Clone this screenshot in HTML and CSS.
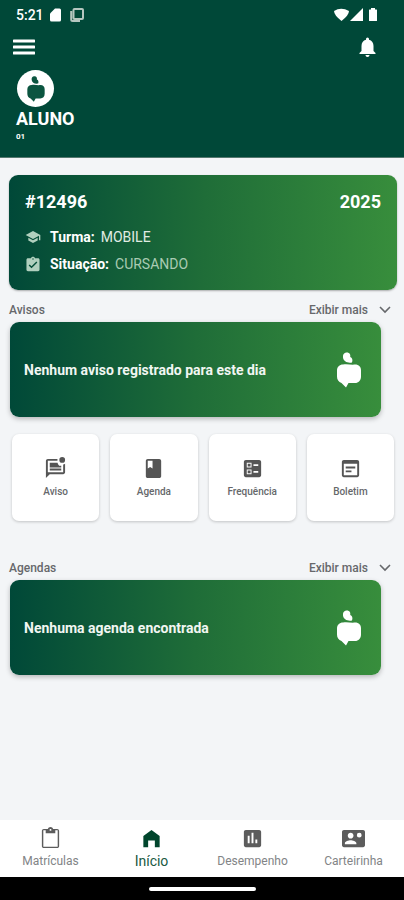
FILE: index.html
```html
<!DOCTYPE html>
<html lang="pt-BR">
<head>
    <meta charset="UTF-8">
    <meta name="viewport" content="width=device-width, initial-scale=1.0">
    <title>Aluno</title>
    <link rel="stylesheet" href="styles.css">
</head>
<body>
    <!-- shared shapes -->
    <svg class="defs" aria-hidden="true">
        <symbol id="apple" viewBox="0 0 24 36">
            <path d="M9 .5c3.500-.5 4.800 2 4.200 4.500 2 .8 2.800 3 1.800 5.500-4.500.8-8.500-1-9-5C5.800 3 6.500 1 9 .5z"/>
            <path d="M6 12.500c4-1 8 .6 12 0 4 0 6 2.500 6 6v6c0 4-2.500 6.500-6 6.500h-6.500L9 35.500 4.500 31C1.500 30 0 27.500 0 24.500v-6c0-3.500 2.500-6 6-6z"/>
        </symbol>
        <symbol id="chevron" viewBox="0 0 12 8">
            <path d="M1 1l5 5 5-5" fill="none" stroke="currentColor" stroke-width="1.6"/>
        </symbol>
    </svg>

    <header>
        <div class="status-bar">
            <span class="clock">5:21</span>
            <svg class="status-icon" viewBox="0 0 14 14"><path d="M6 .5h4.500q1.500 0 1.500 1.500v10q0 1.500-1.500 1.500h-8Q1 13.500 1 12V5.500z"/></svg>
            <svg class="status-icon copy" viewBox="0 0 14 14"><path d="M4.500 1h7.500q1 0 1 1v8q0 1-1 1H4.500q-1 0-1-1V2q0-1 1-1zM1.200 3v8.500q0 1.500 1.500 1.500H10"/></svg>
            <svg class="signal-icons" viewBox="0 0 44 14">
                <path d="M0 3Q7-1.500 15 3 15 7 7.500 13 0 7 0 3z"/>
                <path d="M29 0v13H16z"/>
                <path d="M37 0h4v1.500h1.500q.5 0 .5.500v10.500q0 .5-.5.500h-7q-.5 0-.5-.5V2q0-.5.5-.5H37z"/>
            </svg>
        </div>
        <div class="toolbar">
            <button type="button" aria-label="Menu">
                <svg class="menu-icon" viewBox="0 0 22 16"><path d="M1 2h20M1 8h20M1 14h20"/></svg>
            </button>
            <button type="button" aria-label="Notificações">
                <svg class="bell-icon" viewBox="0 0 16 20"><path d="M8 20c1.100 0 2-.9 2-2H6c0 1.100.9 2 2 2zm6-6V9c0-3.100-1.600-5.600-4.500-6.300v-.7a1.500 1.500 0 0 0-3 0v.7C3.600 3.400 2 5.900 2 9v5l-2 2v1h16v-1z"/></svg>
            </button>
        </div>
        <div class="profile">
            <div class="avatar">
                <svg><use href="#apple"/></svg>
            </div>
            <h1>ALUNO</h1>
            <p>01</p>
        </div>
    </header>

    <main>
        <section class="enrollment">
            <div class="enrollment-top">
                <span>#12496</span>
                <span>2025</span>
            </div>
            <div class="enrollment-row">
                <svg viewBox="0 2 24 20"><path d="M5 13.180v4L12 21l7-3.820v-4L12 17l-7-3.820zM12 3L1 9l11 6 9-4.910V17h2V9L12 3z"/></svg>
                <b>Turma:</b>
                <span>MOBILE</span>
            </div>
            <div class="enrollment-row faded">
                <svg viewBox="2 0 20 22"><path d="M19 3h-4.180C14.400 1.840 13.300 1 12 1s-2.400.84-2.820 2H5c-1.100 0-2 .9-2 2v14c0 1.100.9 2 2 2h14c1.100 0 2-.9 2-2V5c0-1.100-.9-2-2-2zm-7 0c.55 0 1 .45 1 1s-.45 1-1 1-1-.45-1-1 .45-1 1-1zm-2 14l-4-4 1.410-1.410L10 14.170l6.590-6.590L18 9l-8 8z"/></svg>
                <b>Situação:</b>
                <span>CURSANDO</span>
            </div>
        </section>

        <section>
            <div class="section-head">
                <h2>Avisos</h2>
                <button type="button">Exibir mais <svg><use href="#chevron"/></svg></button>
            </div>
            <div class="banner">
                <p>Nenhum aviso registrado para este dia</p>
                <svg><use href="#apple"/></svg>
            </div>
        </section>

        <div class="shortcuts">
            <button type="button">
                <svg viewBox="0 0 24 24"><path d="M18 14H6v-2h12v2zm0-3H6V9h12v2zM6 6h8.100c.2 1.200.8 2.200 1.700 3H6V6zm16 .98V16c0 1.100-.9 2-2 2H6l-4 4V4c0-1.100.9-2 2-2h10.100a5 5 0 0 0 0 2H4v12h16V7.900a5 5 0 0 0 2-.92zM16 3a3 3 0 1 0 6 0 3 3 0 0 0-6 0z"/></svg>
                Aviso
            </button>
            <button type="button">
                <svg viewBox="0 0 24 24"><path d="M18 2H6c-1.100 0-2 .9-2 2v16c0 1.100.9 2 2 2h12c1.100 0 2-.9 2-2V4c0-1.100-.9-2-2-2zM6 4h5v8l-2.500-1.500L6 12V4z"/></svg>
                Agenda
            </button>
            <button type="button">
                <svg viewBox="0 0 24 24"><path d="M13 9.500h5v-2h-5v2zm0 7h5v-2h-5v2zM19 21H5c-1.100 0-2-.9-2-2V5c0-1.100.9-2 2-2h14c1.100 0 2 .9 2 2v14c0 1.100-.9 2-2 2zM6 11h5V6H6v5zm1-4h3v3H7V7zM6 18h5v-5H6v5zm1-4h3v3H7v-3z" fill-rule="evenodd"/></svg>
                Frequência
            </button>
            <button type="button">
                <svg viewBox="0 0 24 24"><path d="M19 3H5c-1.100 0-2 .9-2 2v14c0 1.100.9 2 2 2h14c1.100 0 2-.9 2-2V5c0-1.100-.9-2-2-2zm0 16H5V7h14v12zm-2-7H7v-2h10v2zm-4 4H7v-2h6v2z"/></svg>
                Boletim
            </button>
        </div>

        <section>
            <div class="section-head">
                <h2>Agendas</h2>
                <button type="button">Exibir mais <svg><use href="#chevron"/></svg></button>
            </div>
            <div class="banner">
                <p>Nenhuma agenda encontrada</p>
                <svg><use href="#apple"/></svg>
            </div>
        </section>
    </main>

    <nav>
        <a href="#matriculas">
            <svg viewBox="0 0 24 24"><path d="M19 2h-4.180C14.400.84 13.300 0 12 0S9.600.84 9.180 2H5c-1.100 0-2 .9-2 2v16c0 1.100.9 2 2 2h14c1.100 0 2-.9 2-2V4c0-1.100-.9-2-2-2zm-7 0c.55 0 1 .45 1 1s-.45 1-1 1-1-.45-1-1 .45-1 1-1zm7.500 18.500h-15v-17H7V6.500h10V3.500h2.500v17z"/></svg>
            Matrículas
        </a>
        <a href="#inicio" class="active">
            <svg viewBox="0 0 24 24"><path d="M12 3L3.500 9.500V21h5v-7h7v7h5V9.500z"/></svg>
            Início
        </a>
        <a href="#desempenho">
            <svg viewBox="0 0 24 24"><path d="M19 3H5c-1.100 0-2 .9-2 2v14c0 1.100.9 2 2 2h14c1.100 0 2-.9 2-2V5c0-1.100-.9-2-2-2zM9 17H7V9h2v8zm4 0h-2V6h2v11zm4 0h-2v-4h2v4z"/></svg>
            Desempenho
        </a>
        <a href="#carteirinha">
            <svg viewBox="0 0 24 24"><path d="M22 3H2C.9 3 0 3.900 0 5v14c0 1.100.9 2 2 2h20c1.100 0 2-.9 2-2V5c0-1.100-.9-2-2-2zM9 6c1.660 0 3 1.340 3 3s-1.340 3-3 3-3-1.340-3-3 1.340-3 3-3zm6 12H3v-1c0-2 4-3.100 6-3.100s6 1.100 6 3.100v1zm3-7a2.500 2.500 0 1 1 0-5 2.500 2.500 0 0 1 0 5z"/></svg>
            Carteirinha
        </a>
    </nav>
    <div class="gesture-bar"><span></span></div>
</body>
</html>
```
FILE: styles.css
```css
* {
    box-sizing: border-box;
    margin: 0;
    padding: 0;
}

body {
    min-height: 100vh;
    display: flex;
    flex-direction: column;
    background-color: #f3f5f7;
    color: #66686b;
    font-family: Roboto, "Liberation Sans", sans-serif;
}

button {
    border: none;
    background: none;
    color: inherit;
    font-family: inherit;
    cursor: pointer;
}

svg {
    display: block;
    fill: currentColor;
}

.defs {
    position: absolute;
    width: 0;
    height: 0;
}

header {
    height: 158px;
    background-color: #004838;
    border-bottom: 1px solid #55786f;
    color: white;
}

.status-bar {
    height: 30px;
    display: flex;
    align-items: center;
    gap: 5px;
    padding: 0 26px 0 16px;
}

.clock {
    font-size: 14px;
    font-weight: 500;
}

.status-icon {
    width: 14px;
    height: 14px;
}

.copy {
    margin-left: 2px;
    fill: none;
    stroke: #b4c6bf;
    stroke-width: 2;
}

.signal-icons {
    width: 44px;
    height: 14px;
    margin-left: auto;
}

.toolbar {
    height: 34px;
    display: flex;
    align-items: center;
    justify-content: space-between;
    padding: 0 28px 0 13px;
}

.menu-icon {
    width: 22px;
    height: 16px;
    stroke: white;
    stroke-width: 3;
    stroke-linecap: round;
}

.bell-icon {
    width: 17px;
    height: 20px;
}

.profile {
    padding: 6px 16px 0;
}

.avatar {
    width: 37px;
    height: 37px;
    margin-left: 1px;
    border-radius: 50%;
    background-color: white;
    color: #0b5540;
    display: flex;
    align-items: center;
    justify-content: center;
}

.avatar svg {
    width: 18px;
    height: 26px;
}

h1 {
    font-size: 18px;
    line-height: 24px;
    font-weight: 700;
}

.profile p {
    font-size: 8px;
    line-height: 12px;
    font-weight: 700;
}

main {
    flex-grow: 1;
    padding: 17px 7px 16px 9px;
}

.enrollment,
.banner {
    border-radius: 9px;
    background: linear-gradient(92deg, #004838, #1f6d38 50%, #388e3c);
    color: white;
}

.enrollment {
    padding: 16px;
    box-shadow: 0 1px 2px rgba(0, 0, 0, 0.3);
}

.enrollment-top {
    display: flex;
    justify-content: space-between;
    margin-bottom: 14px;
    font-size: 18px;
    line-height: 22px;
    font-weight: 700;
}

.enrollment-row {
    display: flex;
    align-items: center;
    font-size: 14px;
    line-height: 20px;
}

.enrollment-row + .enrollment-row {
    margin-top: 7px;
}

.enrollment-row svg {
    width: 16px;
    height: 16px;
    margin-right: 9px;
    color: #b0d0be;
}

.enrollment-row b {
    margin-right: 6px;
}

.enrollment-row span {
    color: #e0ece3;
}

.enrollment-row.faded span {
    color: #a9cbb3;
}

.section-head {
    display: flex;
    align-items: center;
    justify-content: space-between;
    height: 24px;
    margin-top: 8px;
    padding-right: 6px;
}

.section-head h2,
.section-head button {
    font-size: 12px;
    font-weight: 500;
}

.section-head button {
    display: flex;
    align-items: center;
    gap: 11px;
}

.section-head svg {
    width: 12px;
    height: 8px;
}

.banner {
    display: flex;
    align-items: center;
    justify-content: space-between;
    min-height: 95px;
    margin: 0 16px 0 1px;
    padding: 0 20px 0 14px;
    box-shadow: 0 2px 5px rgba(0, 0, 0, 0.25);
}

.banner p {
    font-size: 14px;
    font-weight: 700;
    color: #f1f6f2;
}

.banner svg {
    width: 24px;
    height: 36px;
}

.shortcuts {
    display: grid;
    grid-template-columns: repeat(4, 1fr);
    gap: 11px;
    margin: 17px 3px 35px;
}

.shortcuts button {
    height: 87px;
    display: flex;
    flex-direction: column;
    align-items: center;
    justify-content: center;
    gap: 6px;
    border-radius: 7px;
    background-color: white;
    box-shadow: 0 1px 3px rgba(0, 0, 0, 0.2);
    font-size: 10px;
    line-height: 12px;
    font-weight: 500;
}

.shortcuts svg {
    width: 23px;
    height: 23px;
    color: #555;
}

nav {
    display: grid;
    grid-template-columns: repeat(4, 1fr);
    height: 57px;
    background-color: white;
}

nav a {
    display: flex;
    flex-direction: column;
    align-items: center;
    padding-top: 7px;
    gap: 3px;
    color: #828486;
    font-size: 12px;
    line-height: 16px;
    text-decoration: none;
}

nav a.active {
    color: #205a43;
    font-size: 14px;
}

nav svg {
    width: 23px;
    height: 23px;
    color: #5c5c5c;
}

nav .active svg {
    color: #00452c;
}

.gesture-bar {
    height: 23px;
    display: flex;
    align-items: center;
    justify-content: center;
    background-color: black;
}

.gesture-bar span {
    width: 107px;
    height: 4px;
    border-radius: 2px;
    background-color: white;
}
```
